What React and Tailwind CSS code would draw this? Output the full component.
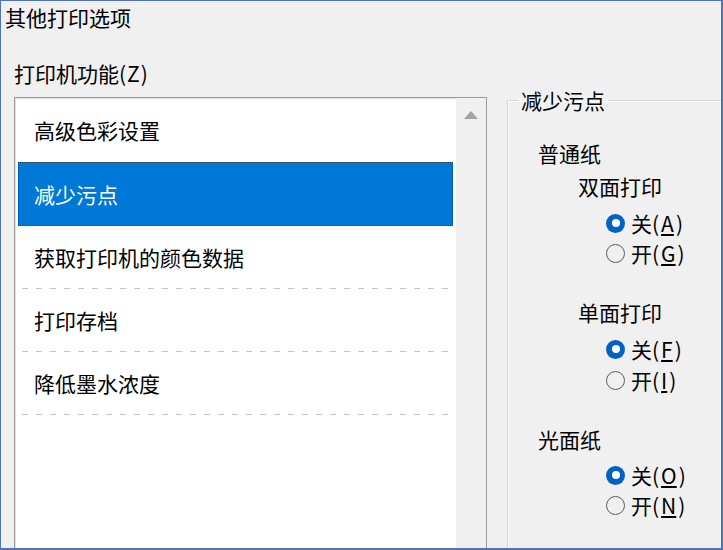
import React from "react";

const FONT = { fontFamily: '"Noto Sans CJK SC", "Noto Sans", sans-serif' };

function Radio({ checked, label, letter }) {
  return (
    <div className="h-[30px] flex items-center pl-[68px]">
      {checked ? (
        <span className="w-[19px] h-[19px] rounded-full bg-[#0063c4] flex items-center justify-center shrink-0">
          <span className="w-[8px] h-[8px] rounded-full bg-white" />
        </span>
      ) : (
        <span className="w-[19px] h-[19px] rounded-full border-[1.5px] border-[#5c5c5c] shrink-0" />
      )}
      <span className="ml-[6px] leading-none">
        {label}(<span className="px-[2px] underline underline-offset-2">{letter}</span>)
      </span>
    </div>
  );
}

const items = ["高级色彩设置", "减少污点", "获取打印机的颜色数据", "打印存档", "降低墨水浓度"];

export default function App() {
  return (
    <div
      className="w-[723px] h-[550px] overflow-hidden bg-[#f0f0f0] border-t border-l-[1.5px] border-r-2 border-b-2 border-[#4f72b8] flex flex-col text-[21px] text-black"
      style={FONT}
    >
      <div className="h-[33px] shrink-0 flex items-center pl-[4px] leading-none">其他打印选项</div>
      <div className="flex flex-1 min-h-0">
        {/* left column */}
        <div className="ml-[13px] w-[473px] shrink-0 flex flex-col">
          <div className="h-[30px] mt-[24px] shrink-0 flex items-center leading-none">
            打印机功能(<span className="px-[1px]">Z</span>)
          </div>
          <div className="mt-[9px] h-[520px] shrink-0 border border-[#9a9a9a] bg-white flex shadow-[inset_1px_1px_0_#e3e3e3]">
            <div className="flex-1 flex flex-col pt-[1px] px-[3px]">
              {items.map((t, i) =>
                i === 1 ? (
                  <div
                    key={t}
                    className="h-[64px] flex items-center pl-[15px] bg-[#0078d7] text-white border border-dotted border-[#2b3d55] leading-none"
                  >
                    {t}
                  </div>
                ) : (
                  <div key={t} className="h-[63px] flex flex-col">
                    <div className="flex-1 flex items-center pl-[16px] leading-none">{t}</div>
                    {i > 1 ? (
                      <div className="h-[1px] mx-[4px] bg-[repeating-linear-gradient(90deg,#c4c4c4_0_6px,transparent_6px_14px)]" />
                    ) : null}
                  </div>
                )
              )}
            </div>
            <div className="w-[30px] bg-[#f0f0f0] flex justify-center pt-[13px]">
              <svg width="14" height="8" viewBox="0 0 14 8">
                <polygon points="7,0 14,8 0,8" fill="#a3a3a3" />
              </svg>
            </div>
          </div>
        </div>

        {/* right group */}
        <fieldset className="ml-[20px] mt-[54px] w-[260px] h-[520px] shrink-0 border border-[#d5d5d5] shadow-[inset_1px_1px_0_#ffffff] px-[10px] pt-[26px] m-0 min-w-0">
          <legend className="px-[3px] leading-[24px]">减少污点</legend>
          <div className="pl-[20px]">
            <div className="h-[30px] flex items-center leading-none">普通纸</div>
            <div className="h-[30px] mt-[3px] flex items-center pl-[40px] leading-none">双面打印</div>
            <div className="mt-[7px]">
              <Radio checked label="关" letter="A" />
              <Radio label="开" letter="G" />
            </div>
            <div className="h-[30px] mt-[29px] flex items-center pl-[40px] leading-none">单面打印</div>
            <div className="mt-[7px]">
              <Radio checked label="关" letter="F" />
              <div className="mt-[1px]">
                <Radio label="开" letter="I" />
              </div>
            </div>
            <div className="h-[30px] mt-[29px] flex items-center leading-none">光面纸</div>
            <div className="mt-[6px]">
              <Radio checked label="关" letter="O" />
              <Radio label="开" letter="N" />
            </div>
          </div>
        </fieldset>
      </div>
    </div>
  );
}
